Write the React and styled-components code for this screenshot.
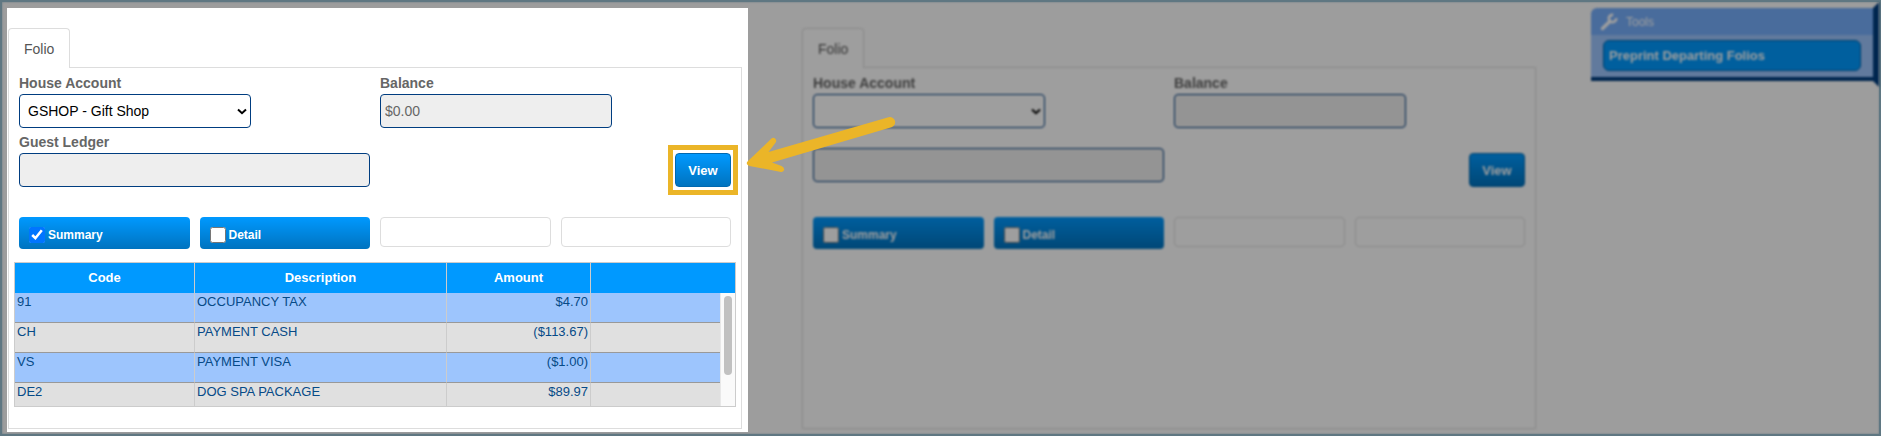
import React, { useState } from "react";
import styled, { createGlobalStyle } from "styled-components";

const GlobalStyle = createGlobalStyle`
  *, *::before, *::after {
    box-sizing: border-box;
  }

  body {
    margin: 0;
    background: #9d9d9d;
    font-family: "Liberation Sans", Arial, Helvetica, sans-serif;
    font-size: 13px;
    color: #555555;
  }

  button, input, select {
    font-family: inherit;
  }
`;

const charges = [
  { code: "91", description: "OCCUPANCY TAX", amount: "$4.70" },
  { code: "CH", description: "PAYMENT CASH", amount: "($113.67)" },
  { code: "VS", description: "PAYMENT VISA", amount: "($1.00)" },
  { code: "DE2", description: "DOG SPA PACKAGE", amount: "$89.97" },
];

function ChargesTable({ rows }) {
  return (
    <TableBox>
      <Table>
        <colgroup>
          <Column $width="25%" />
          <Column $width="35%" />
          <Column $width="20%" />
          <Column $width="20%" />
        </colgroup>
        <thead>
          <tr>
            <HeadCell>Code</HeadCell>
            <HeadCell>Description</HeadCell>
            <HeadCell>Amount</HeadCell>
            <HeadCell />
          </tr>
        </thead>
        <tbody>
          {rows.map((row) => (
            <Row key={row.code}>
              <Cell>{row.code}</Cell>
              <Cell>{row.description}</Cell>
              <Cell $align="right">{row.amount}</Cell>
              <Cell />
            </Row>
          ))}
        </tbody>
      </Table>
      <ScrollTrack>
        <ScrollThumb />
      </ScrollTrack>
    </TableBox>
  );
}

function Toggle({ label, defaultChecked }) {
  const [checked, setChecked] = useState(Boolean(defaultChecked));

  return (
    <ToggleLabel>
      <CheckInput type="checkbox" checked={checked} onChange={() => setChecked(!checked)} />
      {label}
    </ToggleLabel>
  );
}

function Arrow() {
  return (
    <ArrowSvg width="152" height="60" viewBox="0 0 152 60" aria-hidden="true">
      <path
        fill="#ebb528"
        d="M2.5 45.5 L26.5 22.6 Q29 20.8 30.9 23.4 Q31.7 25 30.5 26.8 L23.5 36 L143.5 1.2 A5.2 5.2 0 0 1 146.4 11.2 L27 46.5 L36.5 50 Q39.8 51.6 39 54.2 Q38 56.6 34.8 55.7 L4.5 50 Q.2 48.3 2.5 45.5 Z"
      />
    </ArrowSvg>
  );
}

function WrenchIcon() {
  return (
    <svg width="18" height="18" viewBox="0 0 18 18" fill="none" stroke="#fff" aria-hidden="true">
      <path d="M2.5 15.5 L10 8.3" strokeWidth="3.4" strokeLinecap="round" />
      <path d="M13.2 1.9 A3.7 3.7 0 1 0 16.2 5.1" strokeWidth="2.7" />
    </svg>
  );
}

function Folio({ id, account, balance, ledgerLabel, summary, highlight, rows }) {
  return (
    <section>
      <Tab type="button">Folio</Tab>
      <Panel>
        <Form>
          <Field>
            <Label htmlFor={`${id}-account`}>House Account</Label>
            <SelectWrap>
              <Select id={`${id}-account`} defaultValue={account}>
                <option>{account}</option>
              </Select>
              <Chevron viewBox="0 0 10 7" aria-hidden="true">
                <path d="M1 1.5 L5 5.2 L9 1.5" fill="none" stroke="#000" strokeWidth="2" />
              </Chevron>
            </SelectWrap>
          </Field>
          <Field>
            <Label htmlFor={`${id}-balance`}>Balance</Label>
            <TextInput id={`${id}-balance`} $width="66%" value={balance} readOnly />
          </Field>
          <Field $center={!ledgerLabel}>
            {ledgerLabel && <Label htmlFor={`${id}-ledger`}>{ledgerLabel}</Label>}
            <TextInput id={`${id}-ledger`} aria-label="Guest Ledger" value="" readOnly />
          </Field>
          <Actions>
            <ViewWrap $highlight={highlight}>
              <ViewButton type="button">View</ViewButton>
              {highlight && <Arrow />}
            </ViewWrap>
          </Actions>
        </Form>
        <Toggles>
          <Toggle label="Summary" defaultChecked={summary} />
          <Toggle label="Detail" />
          <EmptySlot />
          <EmptySlot />
        </Toggles>
        {rows && <ChargesTable rows={rows} />}
      </Panel>
    </section>
  );
}

function Tools() {
  return (
    <ToolsBox>
      <ToolsTitle>
        <WrenchIcon />
        Tools
      </ToolsTitle>
      <ToolsBody>
        <ToolButton type="button">Preprint Departing Folios</ToolButton>
      </ToolsBody>
    </ToolsBox>
  );
}

export default function App() {
  return (
    <>
      <GlobalStyle />
      <Page>
        <Spotlight>
          <Folio
            id="left"
            account="GSHOP - Gift Shop"
            balance="$0.00"
            ledgerLabel="Guest Ledger"
            summary
            highlight
            rows={charges}
          />
        </Spotlight>
        <Dimmed>
          <Folio id="right" account="" balance="" />
        </Dimmed>
        <Dimmed>
          <Tools />
        </Dimmed>
      </Page>
    </>
  );
}

const Page = styled.main`
  display: grid;
  grid-template-columns: minmax(0, 741fr) minmax(0, 735fr) 288px;
  column-gap: 54px;
  min-height: 100vh;
  padding: 6px 0 2px 5px;
  border: 2px solid #5f7782;
  background: #9d9d9d;
  box-shadow: inset 0 0 2px #5f7782;
`;

const Spotlight = styled.div`
  position: relative;
  z-index: 1;
  padding: 20px 6px 3px 1px;
  background: #ffffff;

  section {
    height: 100%;
  }
`;

const Dimmed = styled.div`
  filter: brightness(0.62) blur(1px);

  section {
    height: 100%;
    padding: 20px 1px 3px 0;
  }
`;

const Tab = styled.button`
  display: block;
  position: relative;
  z-index: 1;
  height: 40px;
  margin-bottom: -1px;
  padding: 0 15px;
  border: 1px solid #dddddd;
  border-bottom: 0;
  border-radius: 4px 4px 0 0;
  background: #ffffff;
  color: #555555;
  font-size: 14px;
`;

const Panel = styled.div`
  height: calc(100% - 39px);
  padding: 7px 5px 15px;
  border: 1px solid #dddddd;
  background: #ffffff;
`;

const Form = styled.div`
  display: grid;
  grid-template-columns: 1fr 1fr;
  column-gap: 10px;
  row-gap: 6px;
  padding: 0 5px;
`;

const Field = styled.div`
  display: flex;
  flex-direction: column;
  justify-content: ${({ $center }) => ($center ? "center" : "flex-start")};
  padding-top: ${({ $center }) => ($center ? "8px" : "0")};
`;

const Label = styled.label`
  height: 19px;
  line-height: 16px;
  font-size: 14px;
  font-weight: 700;
  color: #666666;
`;

const SelectWrap = styled.div`
  position: relative;
  width: 66%;
`;

const Select = styled.select`
  display: block;
  width: 100%;
  height: 34px;
  padding: 0 8px;
  appearance: none;
  border: 1px solid #003d80;
  border-radius: 4px;
  background: #ffffff;
  color: #000000;
  font-size: 14px;
`;

const Chevron = styled.svg`
  position: absolute;
  right: 4px;
  top: 14px;
  width: 10px;
  height: 7px;
  pointer-events: none;
`;

const TextInput = styled.input`
  width: ${({ $width }) => $width || "100%"};
  height: 34px;
  padding: 0 4px;
  border: 1px solid #003d80;
  border-radius: 4px;
  background: #eeeeee;
  color: #666666;
  font-size: 14px;
`;

const Actions = styled.div`
  display: flex;
  justify-content: flex-end;
  align-items: flex-end;
  min-height: 53px;
`;

const ViewWrap = styled.div`
  position: relative;

  &::before {
    content: ${({ $highlight }) => ($highlight ? '""' : "none")};
    position: absolute;
    inset: -8px -7px;
    border: 5px solid #ebb528;
  }
`;

const blueGradient = "linear-gradient(#0099ff, #0073bf)";

const ViewButton = styled.button`
  display: block;
  position: relative;
  width: 56px;
  height: 34px;
  padding: 0;
  border: 1px solid #0068b0;
  border-radius: 4px;
  background: ${blueGradient};
  color: #ffffff;
  font-size: 13px;
  font-weight: 700;
`;

const ArrowSvg = styled.svg`
  position: absolute;
  left: calc(100% + 14px);
  top: -37px;
`;

const Toggles = styled.div`
  display: grid;
  grid-template-columns: repeat(4, 1fr);
  column-gap: 10px;
  margin: 30px 0 13px;
  padding: 0 5px;
`;

const ToggleLabel = styled.label`
  display: flex;
  align-items: center;
  gap: 3px;
  height: 32px;
  padding: 3px 10px 0;
  border-radius: 4px;
  background: ${blueGradient};
  color: #ffffff;
  font-size: 12px;
  font-weight: 700;
`;

const CheckInput = styled.input`
  width: 16px;
  height: 16px;
  margin: 0;
  accent-color: #0075ff;
`;

const EmptySlot = styled.div`
  height: 30px;
  border: 1px solid #dddddd;
  border-radius: 4px;
  background: #ffffff;
`;

const TableBox = styled.div`
  position: relative;
  height: 145px;
  overflow: hidden;
  border: 1px solid #cccccc;
`;

const Table = styled.table`
  width: 100%;
  table-layout: fixed;
  border-collapse: separate;
  border-spacing: 0;
`;

const Column = styled.col`
  width: ${({ $width }) => $width};
`;

const HeadCell = styled.th`
  height: 30px;
  padding: 0 0 2px;
  border-right: 1px solid #cccccc;
  background: #0099ff;
  color: #ffffff;
  font-size: 13px;

  &:last-child {
    border-right: 0;
  }
`;

const Row = styled.tr`
  background: #9dc5fd;

  &:nth-child(even) {
    background: #e0e0e0;
  }
`;

const Cell = styled.td`
  height: 30px;
  padding: 1px 2px;
  border-right: 1px solid #cccccc;
  border-bottom: 1px solid #999999;
  color: #064a87;
  text-align: ${({ $align }) => $align || "left"};
  vertical-align: top;
  line-height: 15px;

  &:last-child {
    border-right: 0;
  }
`;

const ScrollTrack = styled.div`
  position: absolute;
  top: 30px;
  right: 0;
  bottom: 0;
  width: 15px;
  padding: 3px;
  border-left: 1px solid #e8e8e8;
  background: #fafafa;
`;

const ScrollThumb = styled.div`
  width: 8px;
  height: 79px;
  border-radius: 4px;
  background: #c1c1c1;
`;

const ToolsBox = styled.aside`
  position: relative;
  padding-right: 6px;
  border-bottom: 4px solid #003d80;

  /* bevelled edge running past the box at both ends */
  &::after {
    content: "";
    position: absolute;
    top: -6px;
    right: 0;
    bottom: -10px;
    width: 6px;
    background: #003d80;
    clip-path: polygon(100% 0, 100% 100%, 0 calc(100% - 6px), 0 6px);
  }
`;

const ToolsTitle = styled.div`
  display: flex;
  align-items: center;
  gap: 8px;
  height: 27px;
  padding: 0 9px;
  border-top-left-radius: 6px;
  background: #76aefb;
  color: #ffffff;
  font-size: 12px;
`;

const ToolsBody = styled.div`
  padding: 5px 12px 6px;
  background: #9dc5fd;
`;

const ToolButton = styled.button`
  display: block;
  width: 100%;
  height: 31px;
  padding: 0 5px;
  border: 1px solid #0068b0;
  border-radius: 6px;
  background: #0099ff;
  color: #ffffff;
  font-size: 13px;
  font-weight: 700;
  text-align: left;
`;
